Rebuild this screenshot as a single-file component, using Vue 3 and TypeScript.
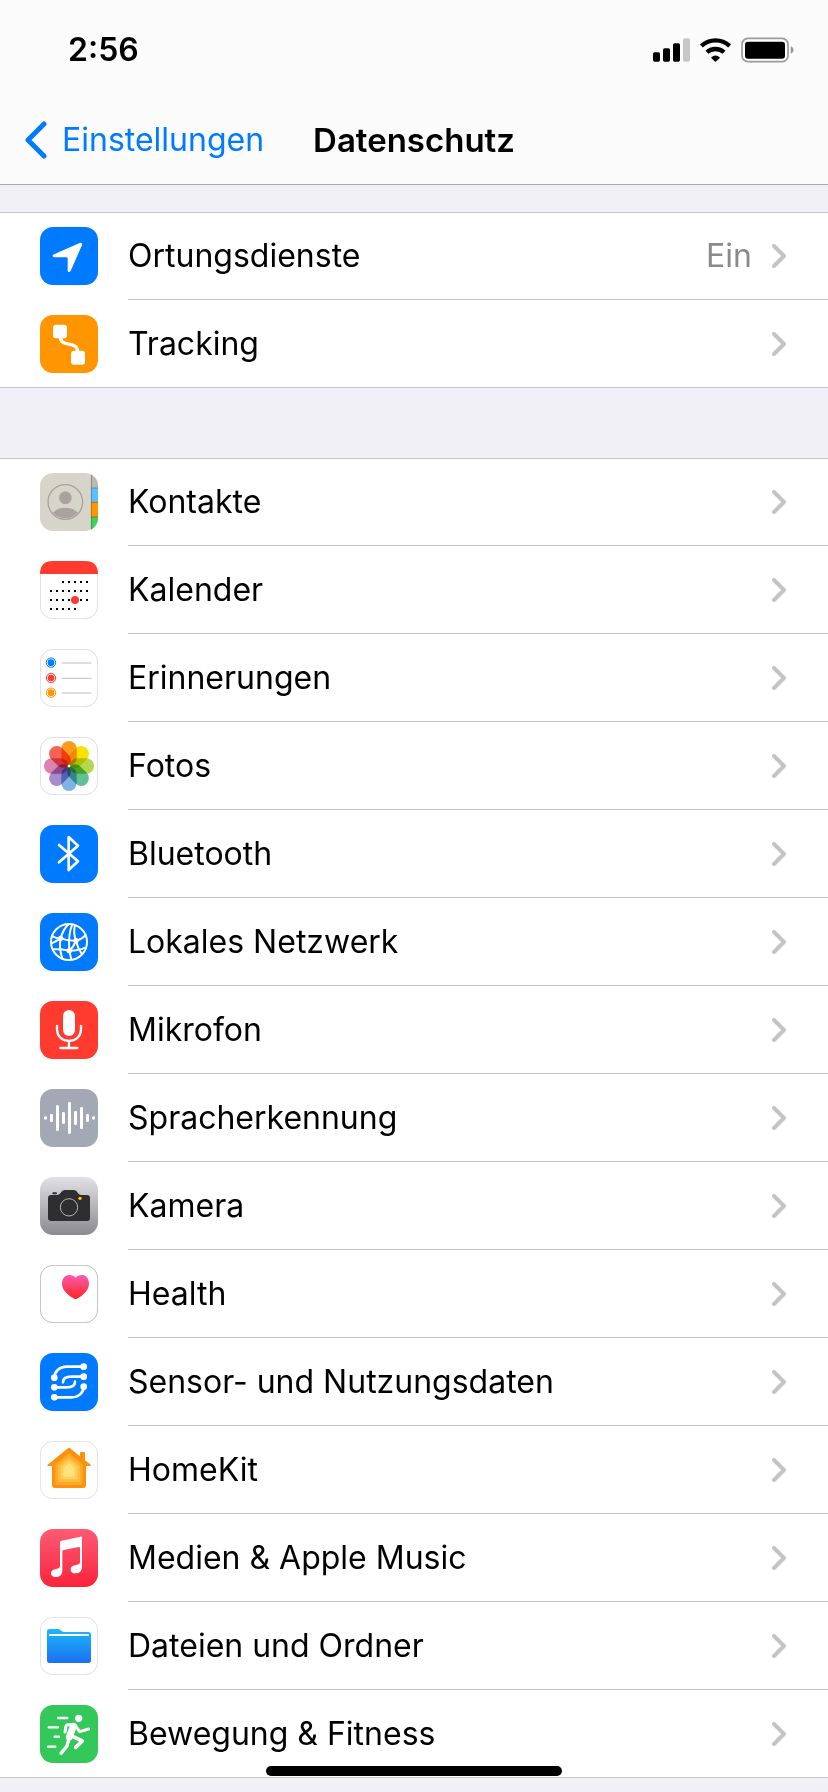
<script setup lang="ts">
interface SettingsItem {
  icon: string
  label: string
  value?: string
}

interface Petal {
  angle: number
  color: string
}

const groups: SettingsItem[][] = [
  [
    { icon: 'location', label: 'Ortungsdienste', value: 'Ein' },
    { icon: 'tracking', label: 'Tracking' },
  ],
  [
    { icon: 'contacts', label: 'Kontakte' },
    { icon: 'calendar', label: 'Kalender' },
    { icon: 'reminders', label: 'Erinnerungen' },
    { icon: 'photos', label: 'Fotos' },
    { icon: 'bluetooth', label: 'Bluetooth' },
    { icon: 'network', label: 'Lokales Netzwerk' },
    { icon: 'microphone', label: 'Mikrofon' },
    { icon: 'speech', label: 'Spracherkennung' },
    { icon: 'camera', label: 'Kamera' },
    { icon: 'health', label: 'Health' },
    { icon: 'sensor', label: 'Sensor- und Nutzungsdaten' },
    { icon: 'home', label: 'HomeKit' },
    { icon: 'music', label: 'Medien & Apple Music' },
    { icon: 'files', label: 'Dateien und Ordner' },
    { icon: 'fitness', label: 'Bewegung & Fitness' },
  ],
]

const tileColors: Record<string, string> = {
  location: '#007aff',
  tracking: '#ff9500',
  contacts: '#d7d5ca',
  bluetooth: '#007aff',
  network: '#007aff',
  microphone: '#ff3b30',
  speech: '#a2a8b4',
  camera: 'url(#camera-tile)',
  sensor: '#007aff',
  music: 'url(#music-tile)',
  fitness: '#34c759',
}

const outlined = ['calendar', 'reminders', 'photos', 'health', 'home', 'files']

const petals: Petal[] = [
  { angle: 0, color: '#fb9b1e' },
  { angle: 45, color: '#f7e200' },
  { angle: 90, color: '#b4d84c' },
  { angle: 135, color: '#62c096' },
  { angle: 180, color: '#80b2e6' },
  { angle: 225, color: '#a68ccb' },
  { angle: 270, color: '#da82b0' },
  { angle: 315, color: '#f66355' },
]

const calendarDots: [number, number][] = []
for (let row = 0; row < 4; row++) {
  for (let col = 0; col < 7; col++) {
    if ((row === 0 && col < 2) || (row === 3 && col > 4)) continue
    calendarDots.push([30 + col * 18, 60 + row * 27])
  }
}

const reminderRows = [
  { y: 41, color: '#007aff' },
  { y: 87, color: '#ff3b30' },
  { y: 131, color: '#ff9500' },
]

const waveBars = [10, 24, 78, 36, 96, 42, 66, 24, 10]
</script>

<template>
  <div class="screen">
    <header class="header">
      <div class="status">
        <span class="time">2:56</span>
        <div class="status-icons">
          <svg width="37" height="24" viewBox="0 0 111 72" aria-hidden="true">
            <rect x="0" y="43" width="21" height="28" rx="5" />
            <rect x="30" y="31" width="21" height="40" rx="5" />
            <rect x="60" y="16" width="21" height="55" rx="5" />
            <rect x="90" y="1" width="21" height="70" rx="5" fill="#c8c8c8" />
          </svg>
          <svg width="31" height="24" viewBox="0 0 93 72" aria-hidden="true">
            <g fill="none" stroke="#000" stroke-width="13">
              <path d="M4 24Q22 7 46.500 7Q71 7 89 24" />
              <path d="M21 43Q31 33 46.500 33Q62 33 72 43" />
            </g>
            <path d="M33 59Q46.500 46 60 59L49 70Q46.500 72 44 70Z" />
          </svg>
          <svg width="53" height="26" viewBox="0 0 159 78" aria-hidden="true">
            <rect x="3" y="4" width="138" height="70" rx="18" fill="#fff" stroke="#9a9a9a" stroke-width="5" />
            <rect x="12" y="14" width="120" height="51" rx="9" />
            <path d="M149 27Q158 31 158 39Q158 47 149 51Z" fill="#9a9a9a" />
          </svg>
        </div>
      </div>
      <nav class="nav">
        <a class="back" href="#einstellungen">
          <svg width="24" height="38" viewBox="0 0 24 38" aria-hidden="true">
            <path d="M20 3L4 19L20 35" fill="none" stroke="#007aff" stroke-width="5" stroke-linecap="round" stroke-linejoin="round" />
          </svg>
          <span>Einstellungen</span>
        </a>
        <h1 class="title">Datenschutz</h1>
      </nav>
    </header>

    <main class="content">
      <ul v-for="(group, g) in groups" :key="g" class="group">
        <li v-for="item in group" :key="item.icon" class="entry">
          <a class="row" :href="'#' + item.icon">
            <svg class="icon" viewBox="0 0 174 174" aria-hidden="true">
              <rect v-if="!outlined.includes(item.icon)" width="174" height="174" rx="39" :fill="tileColors[item.icon]" />

              <path v-if="item.icon === 'location'" d="M42 82L119 48Q128 45 126 54L92 132Q89 136 85 135Q83 134 83 130V94Q83 91 80 91H42Q38 90 38 87Q38 84 42 82Z" fill="#fff" />

              <g v-else-if="item.icon === 'tracking'" fill="#fff">
                <rect x="39" y="29" width="42" height="41" rx="9" />
                <rect x="93" y="107" width="42" height="42" rx="9" />
                <path d="M61 66C61 100 113 75 113 111" fill="none" stroke="#fff" stroke-width="10" />
              </g>

              <g v-else-if="item.icon === 'contacts'">
                <defs>
                  <clipPath id="contacts-clip"><rect width="174" height="174" rx="39" /></clipPath>
                  <clipPath id="contacts-face"><circle cx="76" cy="87" r="49" /></clipPath>
                </defs>
                <g clip-path="url(#contacts-clip)">
                  <rect x="153" y="0" width="21" height="45" fill="#bbb8ae" />
                  <rect x="153" y="45" width="21" height="42" fill="#5ac0fa" />
                  <rect x="153" y="87" width="21" height="45" fill="#ff9500" />
                  <rect x="153" y="132" width="21" height="42" fill="#41d05d" />
                  <path d="M154 0V174M154 45H174M154 88H174M154 132H174" stroke="#000" stroke-opacity=".25" stroke-width="3" />
                </g>
                <circle cx="76" cy="87" r="52" fill="none" stroke="#aaa29c" stroke-width="4" />
                <g clip-path="url(#contacts-face)" fill="#aaa29c">
                  <circle cx="76" cy="74" r="19" />
                  <ellipse cx="76" cy="137" rx="45" ry="33" />
                </g>
              </g>

              <g v-else-if="item.icon === 'calendar'">
                <rect x="1" y="1" width="172" height="172" rx="38" fill="#fff" stroke="#dedee0" stroke-width="3" />
                <path d="M0 39Q0 0 39 0H135Q174 0 174 39Z" fill="#ff3b30" />
                <rect v-for="(dot, d) in calendarDots" :key="d" :x="dot[0]" :y="dot[1]" width="6" height="6" />
                <circle cx="105" cy="117" r="12" fill="#ff3b30" />
              </g>

              <g v-else-if="item.icon === 'reminders'">
                <rect x="1" y="1" width="172" height="172" rx="38" fill="#fff" stroke="#dedee0" stroke-width="3" />
                <g v-for="line in reminderRows" :key="line.y">
                  <circle cx="33" :cy="line.y" r="14" fill="#fff" :stroke="line.color" stroke-width="3" />
                  <circle cx="33" :cy="line.y" r="10" :fill="line.color" />
                  <path :d="`M65 ${line.y + 1}H154`" stroke="#bdbdc1" stroke-width="3" />
                </g>
              </g>

              <g v-else-if="item.icon === 'photos'">
                <rect x="1" y="1" width="172" height="172" rx="38" fill="#fff" stroke="#dedee0" stroke-width="3" />
                <g class="petals">
                  <rect
                    v-for="petal in petals"
                    :key="petal.angle"
                    x="64"
                    y="12"
                    width="46"
                    height="73"
                    rx="23"
                    :fill="petal.color"
                    :transform="`rotate(${petal.angle} 87 87)`"
                  />
                </g>
                <circle cx="87" cy="87" r="4" fill="#fff" />
              </g>

              <path
                v-else-if="item.icon === 'bluetooth'"
                d="M57 60L114 109L86 135V36L114 62L57 112"
                fill="none"
                stroke="#fff"
                stroke-width="8"
                stroke-linecap="round"
                stroke-linejoin="round"
              />

              <g v-else-if="item.icon === 'network'" fill="none" stroke="#fff" stroke-width="6">
                <circle cx="87" cy="87" r="54" />
                <path d="M86 33Q68 51 62 76Q56 104 67 137" />
                <path d="M97 34Q84 62 88 113L94 140" />
                <path d="M105 36Q99 60 108 83Q113 106 126 124" />
                <path d="M37 70Q48 76 62 76Q84 84 108 83Q127 78 137 66" />
                <path d="M33 92Q50 84 62 76" />
                <path d="M39 109Q64 108 88 113Q117 113 137 103" />
                <path d="M88 113Q101 102 108 83" />
                <g fill="#fff" stroke="none">
                  <circle cx="62" cy="76" r="8" />
                  <circle cx="108" cy="83" r="8" />
                  <circle cx="88" cy="113" r="8" />
                </g>
              </g>

              <g v-else-if="item.icon === 'microphone'">
                <rect x="69" y="27" width="36" height="78" rx="18" fill="#fff" />
                <path d="M51 75V84C51 132 123 132 123 84V75M87 121V141M61 141H112" fill="none" stroke="#fff" stroke-width="7" stroke-linecap="round" />
              </g>

              <g v-else-if="item.icon === 'speech'" fill="#fff">
                <rect v-for="(h, b) in waveBars" :key="b" :x="12 + b * 18" :y="87 - h / 2" width="9" :height="h" rx="4" />
              </g>

              <g v-else-if="item.icon === 'camera'">
                <defs>
                  <linearGradient id="camera-tile" x1="0" y1="0" x2="0" y2="1">
                    <stop offset="0" stop-color="#e2e2e6" />
                    <stop offset="1" stop-color="#8b8a8f" />
                  </linearGradient>
                </defs>
                <path d="M24 64Q24 54 34 54H51Q58 54 62 47Q67 39 74 39H102Q109 39 113 47Q117 54 124 54H141Q150 54 150 64V123Q150 132 141 132H34Q24 132 24 123Z" fill="#2e2d2f" />
                <rect x="37" y="46" width="14" height="6" rx="3" fill="#2e2d2f" />
                <circle cx="87" cy="91" r="26" fill="none" stroke="#b4b4b6" stroke-width="3" />
                <circle cx="120" cy="64" r="5" fill="#ffcc00" />
              </g>

              <g v-else-if="item.icon === 'health'">
                <defs>
                  <linearGradient id="health-heart" x1="0" y1="0" x2="0" y2="1">
                    <stop offset="0" stop-color="#fb5cb1" />
                    <stop offset="1" stop-color="#ff2420" />
                  </linearGradient>
                </defs>
                <rect x="1" y="1" width="172" height="172" rx="38" fill="#fff" stroke="#bebec1" stroke-width="3" />
                <path d="M107 38C98 26 66 24 66 56C66 77 87 92 103 101Q107 103 111 101C127 92 147 77 147 56C147 24 116 26 107 38Z" fill="url(#health-heart)" />
              </g>

              <g v-else-if="item.icon === 'sensor'" fill="none" stroke="#fff" stroke-width="8" stroke-linecap="round">
                <path d="M43 74C43 56 57 41 81 41H131" />
                <path d="M43 103H80C97 103 105 97 105 86" />
                <path d="M131 71H94C77 71 69 77 69 88" />
                <path d="M43 133H94C117 133 131 118 131 101" />
                <g fill="#fff" stroke="none">
                  <circle cx="131" cy="41" r="10" />
                  <circle cx="131" cy="71" r="10" />
                  <circle cx="131" cy="101" r="10" />
                  <circle cx="43" cy="74" r="10" />
                  <circle cx="43" cy="103" r="10" />
                  <circle cx="43" cy="133" r="10" />
                </g>
              </g>

              <g v-else-if="item.icon === 'home'">
                <rect x="1" y="1" width="172" height="172" rx="38" fill="#fff" stroke="#e2e2e4" stroke-width="3" />
                <path d="M87 20Q89 20 92 23L120 46V36Q120 33 123 33H132Q135 33 135 36V58L152 71Q154 75 150 75H138V132Q138 141 129 141H45Q36 141 36 132V75H24Q20 75 23 71L82 23Q85 20 87 20Z" fill="#fc910d" />
                <path d="M87 37L128 70V126Q128 132 122 132H52Q46 132 46 126V70Z" fill="#fda928" />
                <path d="M87 47L120 74V119Q120 123 116 123H58Q54 123 54 119V74Z" fill="#fdbd43" />
                <path d="M87 57L112 77V111Q112 115 108 115H66Q62 115 62 111V77Z" fill="#fed05b" />
                <path d="M87 67L104 81V103Q104 107 100 107H74Q70 107 70 103V81Z" fill="#ffe37a" />
              </g>

              <g v-else-if="item.icon === 'music'">
                <defs>
                  <linearGradient id="music-tile" x1="0" y1="0" x2="0" y2="1">
                    <stop offset="0" stop-color="#fb5c74" />
                    <stop offset="1" stop-color="#fa233b" />
                  </linearGradient>
                </defs>
                <path d="M60 40Q60 36 65 35L121 23Q126 22 126 27V113C126 126 118 133 106 133C96 133 92 128 92 122C92 113 99 109 108 108Q120 106 120 100V57Q120 53 116 54L71 63Q67 64 67 68V125C67 138 58 144 47 144C37 144 33 139 33 133C33 125 40 121 48 120Q60 118 60 111Z" fill="#fff" />
              </g>

              <g v-else-if="item.icon === 'files'">
                <defs>
                  <linearGradient id="files-folder" x1="0" y1="0" x2="0" y2="1">
                    <stop offset="0" stop-color="#1ab9fa" />
                    <stop offset="1" stop-color="#1c70f0" />
                  </linearGradient>
                </defs>
                <rect x="1" y="1" width="172" height="172" rx="38" fill="#fff" stroke="#e0e0e2" stroke-width="3" />
                <path d="M21 43Q21 36 29 36H54Q58 36 61 39L66 43Q68 45 73 45H145Q153 45 153 53V130Q153 138 145 138H29Q21 138 21 130Z" fill="url(#files-folder)" />
                <rect x="27" y="51" width="120" height="6" rx="3" fill="#fff" />
              </g>

              <g v-else-if="item.icon === 'fitness'" fill="none" stroke="#fff" stroke-linecap="round" stroke-linejoin="round">
                <circle cx="116" cy="40" r="11" fill="#fff" stroke="none" />
                <path d="M54 39H82M26 67H54M44 95H57M24 125H46" stroke-width="7" />
                <path d="M75 81L78 63Q79 60 83 59L104 59L119 80L146 72" stroke-width="9" />
                <path d="M100 64L88 96" stroke-width="21" />
                <path d="M88 96L81 123L63 145" stroke-width="10" />
                <path d="M98 94L127 108L107 127" stroke-width="11" />
              </g>
            </svg>
            <span class="line">
              <span class="label">{{ item.label }}</span>
              <span v-if="item.value" class="value">{{ item.value }}</span>
              <svg class="chevron" width="14" height="24" viewBox="0 0 14 24" aria-hidden="true">
                <path d="M2 2L12 12L2 22" fill="none" stroke="#c4c4c6" stroke-width="4" stroke-linecap="round" stroke-linejoin="round" />
              </svg>
            </span>
          </a>
        </li>
      </ul>
    </main>

    <div class="home-indicator"></div>
  </div>
</template>

<style>
body {
  margin: 0;
  background: #f0f0f6;
}
</style>

<style scoped>
.screen {
  min-height: 100vh;
  background: #f0f0f6;
  color: #000;
  font-family: Inter, Roboto, "Liberation Sans", sans-serif;
  font-size: 32px;
  line-height: 40px;
}

.header {
  padding-bottom: 4px;
  background: #fbfbfc;
  border-bottom: 1px solid #a7a7ac;
}

.status {
  display: flex;
  align-items: center;
  justify-content: space-between;
  height: 100px;
  padding: 0 34px 0 68px;
}

.time {
  font-weight: 600;
}

.status-icons {
  display: flex;
  align-items: center;
  gap: 10px;
}

.nav {
  display: grid;
  grid-template-columns: 1fr auto 1fr;
  align-items: center;
  height: 80px;
  padding: 0 24px;
}

.back {
  display: flex;
  align-items: center;
  gap: 14px;
  color: #007aff;
  text-decoration: none;
}

.title {
  margin: 0;
  font-size: 33px;
  font-weight: 600;
}

.content {
  display: flex;
  flex-direction: column;
  gap: 70px;
  padding: 27px 0 14px;
}

.group {
  margin: 0;
  padding: 0;
  list-style: none;
  background: #fff;
  box-shadow: inset 0 1px #c4c4c7, inset 0 -1px #c4c4c7;
}

.row {
  display: flex;
  align-items: center;
  gap: 30px;
  height: 88px;
  padding-left: 40px;
  color: inherit;
  text-decoration: none;
}

.icon {
  flex: none;
  width: 58px;
  height: 58px;
}

.line {
  display: flex;
  flex: 1;
  align-items: center;
  height: 88px;
  padding-right: 42px;
}

.entry:not(:last-child) .line {
  box-shadow: inset 0 -1px #c4c4c7;
}

.label {
  flex: 1;
}

.value {
  margin-right: 20px;
  color: #8a8a8e;
}

.petals rect {
  mix-blend-mode: multiply;
}

.home-indicator {
  position: fixed;
  bottom: 16px;
  left: 50%;
  width: 296px;
  height: 10px;
  margin-left: -148px;
  border-radius: 5px;
  background: #000;
}
</style>
